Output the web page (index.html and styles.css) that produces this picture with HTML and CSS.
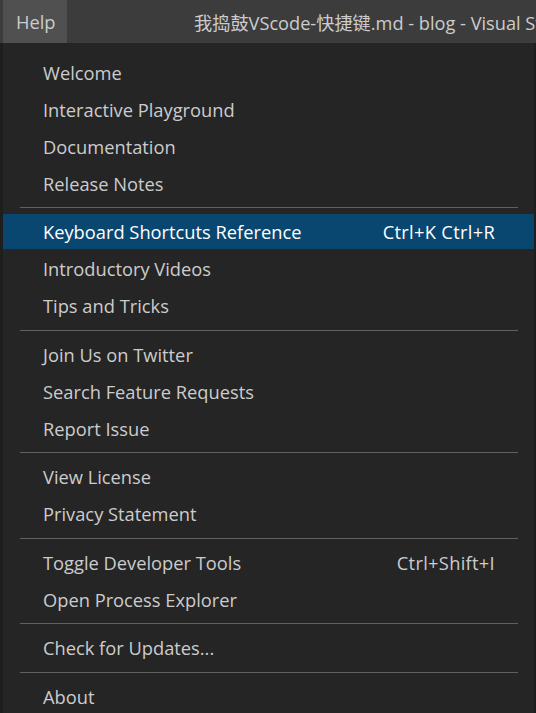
FILE: index.html
```html
<!DOCTYPE html>
<html>
<head>
<meta charset="utf-8">
<link rel="stylesheet" href="styles.css">
</head>
<body>
<div class="titlebar">
  <div class="menubar-item">Help</div>
  <div class="title">我捣鼓VScode-快捷键.md - blog - Visual Studio Code</div>
</div>
<div class="workspace">
  <div class="edge-left"></div>
  <div class="menu">
    <div class="item"><span class="label">Welcome</span></div>
    <div class="item"><span class="label">Interactive Playground</span></div>
    <div class="item"><span class="label">Documentation</span></div>
    <div class="item"><span class="label">Release Notes</span></div>
    <div class="sep"></div>
    <div class="item active"><span class="label">Keyboard Shortcuts Reference</span><span class="key">Ctrl+K Ctrl+R</span></div>
    <div class="item"><span class="label">Introductory Videos</span></div>
    <div class="item"><span class="label">Tips and Tricks</span></div>
    <div class="sep"></div>
    <div class="item"><span class="label">Join Us on Twitter</span></div>
    <div class="item"><span class="label">Search Feature Requests</span></div>
    <div class="item"><span class="label">Report Issue</span></div>
    <div class="sep"></div>
    <div class="item"><span class="label">View License</span></div>
    <div class="item"><span class="label">Privacy Statement</span></div>
    <div class="sep"></div>
    <div class="item"><span class="label">Toggle Developer Tools</span><span class="key">Ctrl+Shift+I</span></div>
    <div class="item"><span class="label">Open Process Explorer</span></div>
    <div class="sep"></div>
    <div class="item"><span class="label">Check for Updates...</span></div>
    <div class="sep"></div>
    <div class="item"><span class="label">About</span></div>
  </div>
  <div class="edge-right"></div>
</div>
</body>
</html>
```
FILE: styles.css
```css
html, body {
  margin: 0;
  padding: 0;
  width: 536px;
  height: 713px;
  overflow: hidden;
  background: #1e1e1e;
  font-family: "Open Sans", "Noto Sans CJK SC", sans-serif;
  color: #cccccc;
}
.titlebar {
  height: 43px;
  background: #3c3c3c;
  display: flex;
  align-items: stretch;
  padding-left: 3px;
  white-space: nowrap;
  overflow: hidden;
  font-size: 18.3px;
}
.menubar-item {
  flex-shrink: 0;
  width: 51px;
  padding-left: 13px;
  background: #505050;
  display: flex;
  align-items: center;
  color: #cccccc;
}
.title {
  flex-shrink: 0;
  margin-left: 127px;
  display: flex;
  align-items: center;
  color: #cccccc;
  font-size: 18.2px;
}
.workspace {
  display: flex;
  height: 670px;
}
.edge-left {
  flex-shrink: 0;
  width: 3px;
  background: #1e1e1e;
}
.edge-right {
  flex-shrink: 0;
  width: 2px;
  background: #1e1e1e;
}
.menu {
  flex-shrink: 0;
  width: 531px;
  background: #252526;
  padding-top: 10.5px;
  font-size: 18.3px;
  display: flex;
  flex-direction: column;
}
.item {
  flex-shrink: 0;
  height: 35px;
  margin: 1px 0;
  display: flex;
  align-items: center;
  justify-content: space-between;
  padding: 0 39px 0 40px;
  color: #cccccc;
  white-space: nowrap;
}
.item.active {
  background: #094771;
  color: #ffffff;
}
.key {
  letter-spacing: 0.3px;
}
.sep {
  flex-shrink: 0;
  height: 1px;
  background: #606060;
  margin: 5.5px 16px 5px 17px;
}
```
